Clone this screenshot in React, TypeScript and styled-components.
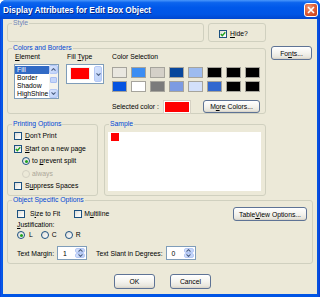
import React from 'react';
import styled, { createGlobalStyle } from 'styled-components';

const Global = createGlobalStyle`
  html, body { margin: 0; padding: 0; background: #ffffff; }
  body { font-family: "Liberation Sans", Arial, sans-serif; -webkit-font-smoothing: antialiased; }
`;

const Window = styled.div`
  width: 320px;
  height: 297px;
  box-sizing: border-box;
  display: flex;
  flex-direction: column;
  background: linear-gradient(to right, #0831D9 0px, #0A5AE8 1px, #0055E5 3px, #0055E5 317px, #0A4CD8 319px, #0831D9 320px);
  border-radius: 6px 6px 0 0;
  overflow: hidden;
`;

const TitleBar = styled.div`
  height: 19px;
  flex: none;
  display: flex;
  align-items: center;
  justify-content: space-between;
  padding: 0 2px 0 3px;
  background: linear-gradient(to bottom, #4A97FB 0%, #0C64EE 14%, #0058EA 40%, #0055E5 75%, #0046CF 100%);
`;

const Title = styled.span`
  color: #ffffff;
  font-weight: bold;
  font-size: 8.3px;
  line-height: 10px;
  text-shadow: 1px 1px 0 #0A2A8A;
  padding-top: 1px;
`;

const CloseBtn = styled.div`
  width: 14px;
  height: 14px;
  box-sizing: border-box;
  border: 1px solid #ffffff;
  border-radius: 3px;
  background: radial-gradient(circle at 35% 30%, #F09A78 0%, #E0613A 45%, #C43A12 100%);
  display: flex;
  align-items: center;
  justify-content: center;
  margin-top: 1px;
`;

const Body = styled.div`
  flex: 1;
  margin: 0 3px 3px 3px;
  background: #ECE9D8;
  padding: 4px 5px 0 4px;
  display: flex;
  flex-direction: column;
  font-size: 6.8px;
  color: #000000;
`;

const TopArea = styled.div`
  display: flex;
  gap: 5px;
`;

const LeftCol = styled.div`
  width: 259px;
  display: flex;
  flex-direction: column;
`;

const RightCol = styled.div`
  display: flex;
  flex-direction: column;
  padding-top: 23px;
`;

const Row = styled.div<{ $gap: number; $mt?: number }>`
  display: flex;
  gap: ${(p) => p.$gap}px;
  margin-top: ${(p) => p.$mt ?? 0}px;
`;

const Group = styled.div<{ $w: number; $h: number; $mt?: number }>`
  position: relative;
  box-sizing: border-box;
  width: ${(p) => p.$w}px;
  height: ${(p) => p.$h}px;
  margin-top: ${(p) => p.$mt ?? 0}px;
  border: 1px solid #D0D0BF;
  border-radius: 3px;
  flex: none;
`;

const Caption = styled.span<{ $muted?: boolean }>`
  position: absolute;
  top: -5px;
  left: 4px;
  padding: 0 1px;
  background: #ECE9D8;
  color: ${(p) => (p.$muted ? '#6F86B8' : '#0046D5')};
  font-size: 6.8px;
  line-height: 8px;
  white-space: nowrap;
`;

const Key = styled.span`
  text-decoration: underline;
  text-underline-offset: 1px;
`;

const HideInner = styled.div`
  height: 100%;
  display: flex;
  align-items: center;
  padding: 1px 0 0 10px;
`;

const Check = styled.label<{ $gap?: number; $dim?: boolean; $ml?: number }>`
  display: flex;
  align-items: center;
  gap: ${(p) => p.$gap ?? 3}px;
  margin-left: ${(p) => p.$ml ?? 0}px;
  height: 8px;
  line-height: 8px;
  white-space: nowrap;
  color: ${(p) => (p.$dim ? '#ACA899' : '#000000')};
`;

const Box = styled.span`
  width: 8px;
  height: 8px;
  box-sizing: border-box;
  border: 1px solid #1C5180;
  background: linear-gradient(135deg, #DCDCD7 0%, #F5F5F3 60%, #FFFFFF 100%);
  display: flex;
  align-items: center;
  justify-content: center;
  flex: none;
`;

const Radio = styled.span<{ $disabled?: boolean }>`
  width: 8px;
  height: 8px;
  box-sizing: border-box;
  border-radius: 50%;
  border: 1px solid ${(p) => (p.$disabled ? '#D4D1C3' : '#1C5180')};
  background: ${(p) => (p.$disabled ? '#ECE9D8' : 'linear-gradient(135deg, #DCDCD7 0%, #FFFFFF 100%)')};
  display: flex;
  align-items: center;
  justify-content: center;
  flex: none;
`;

const Dot = styled.span`
  width: 3px;
  height: 3px;
  border-radius: 50%;
  background: #21A121;
`;

const CheckMark = () => (
  <svg width="6" height="6" viewBox="0 0 6 6">
    <polyline points="0.8,3 2.3,4.6 5.3,1.2" fill="none" stroke="#21A121" strokeWidth="1.4" />
  </svg>
);

const Button = styled.div<{ $w: number; $h?: number }>`
  width: ${(p) => p.$w}px;
  height: ${(p) => p.$h ?? 14}px;
  box-sizing: border-box;
  border: 1px solid #5E7395;
  border-radius: 3px;
  background: linear-gradient(to bottom, #FFFFFF 0%, #F4F3EE 50%, #E8E6DD 85%, #D6D0C5 100%);
  display: flex;
  align-items: center;
  justify-content: center;
  font-size: 6.8px;
  color: #000000;
  white-space: nowrap;
  flex: none;
`;

const ColorsInner = styled.div`
  display: flex;
  padding: 4px 0 0 6px;
`;

const Column = styled.div<{ $w?: number; $ml?: number }>`
  display: flex;
  flex-direction: column;
  width: ${(p) => (p.$w ? `${p.$w}px` : 'auto')};
  margin-left: ${(p) => p.$ml ?? 0}px;
`;

const FieldLabel = styled.div<{ $pl?: number }>`
  line-height: 8px;
  height: 8px;
  padding-left: ${(p) => p.$pl ?? 1}px;
  white-space: nowrap;
`;

const InlineLabel = styled.span<{ $ml?: number }>`
  margin-left: ${(p) => p.$ml ?? 0}px;
  white-space: nowrap;
`;

const ListBox = styled.div`
  margin-top: 3px;
  width: 45px;
  height: 35px;
  box-sizing: border-box;
  border: 1px solid #7F9DB9;
  background: #ffffff;
  display: flex;
`;

const ListItems = styled.div`
  flex: 1;
  display: flex;
  flex-direction: column;
  padding-top: 1px;
`;

const ListItem = styled.div<{ $sel?: boolean }>`
  height: 8px;
  line-height: 8px;
  padding-left: 2px;
  background: ${(p) => (p.$sel ? '#316AC5' : 'transparent')};
  color: ${(p) => (p.$sel ? '#ffffff' : '#000000')};
  white-space: nowrap;
  overflow: hidden;
`;

const ScrollBar = styled.div`
  width: 9px;
  display: flex;
  flex-direction: column;
  background: #F4F3EE;
`;

const ScrollBtn = styled.div<{ $h?: number }>`
  height: ${(p) => p.$h ?? 9}px;
  box-sizing: border-box;
  border: 1px solid #B4C8F6;
  border-radius: 2px;
  background: linear-gradient(135deg, #D8E4FD 0%, #BCD0F8 100%);
  display: flex;
  align-items: center;
  justify-content: center;
  flex: none;
`;

const ScrollTrack = styled.div`
  flex: 1;
  display: flex;
  flex-direction: column;
  padding-top: 3px;
`;

const Thumb = styled.div`
  height: 4px;
  margin: 0 1px;
  border-radius: 1px;
  background: #C4D5FA;
  border: 1px solid #A8BEF2;
`;

const Arrow = ({ up, color = '#4D6185' }: { up?: boolean; color?: string }) => (
  <svg width="5" height="3" viewBox="0 0 5 3">
    <polyline
      points={up ? '0.5,2.6 2.5,0.6 4.5,2.6' : '0.5,0.4 2.5,2.4 4.5,0.4'}
      fill="none"
      stroke={color}
      strokeWidth="1.1"
    />
  </svg>
);

const Dropdown = styled.div`
  margin-top: 3px;
  width: 38px;
  height: 20px;
  box-sizing: border-box;
  border: 1px solid #7F9DB9;
  background: #ffffff;
  display: flex;
  align-items: stretch;
  padding: 1px;
  gap: 5px;
`;

const DropSwatch = styled.div`
  width: 18px;
  height: 11px;
  margin: 2px 0 0 3px;
  background: #FF0000;
  box-shadow: 0 0 0 1px #F0F0F0;
`;

const DropBtn = styled.div`
  width: 8px;
  margin-left: auto;
  box-sizing: border-box;
  border: 1px solid #B4C8F6;
  border-radius: 2px;
  background: linear-gradient(135deg, #D8E4FD 0%, #BCD0F8 100%);
  display: flex;
  align-items: center;
  justify-content: center;
`;

const SwatchGrid = styled.div`
  margin-top: 6px;
  display: grid;
  grid-template-columns: repeat(8, 15px);
  grid-auto-rows: 11px;
  column-gap: 4px;
  row-gap: 3px;
`;

const Swatch = styled.div<{ $c: string }>`
  box-sizing: border-box;
  background: ${(p) => p.$c};
  border: 1px solid #A6A49C;
`;

const SelectedRow = styled.div`
  margin-top: 8px;
  display: flex;
  align-items: center;
  height: 13px;
`;

const SelSwatch = styled.div`
  margin-left: 5px;
  width: 26px;
  height: 12px;
  box-sizing: border-box;
  border: 1px solid #FFFFFF;
  outline: 1px solid #D6D2C4;
  background: #FF0000;
`;

const PrintInner = styled.div`
  display: flex;
  flex-direction: column;
  gap: 4.5px;
  padding: 7px 0 0 6px;
`;

const Indent = styled.div`
  margin-left: 8px;
`;

const SampleArea = styled.div`
  margin: 7px 0 0 3px;
  width: 153px;
  height: 59px;
  background: #FFFFFF;
  padding: 1px 0 0 3px;
  box-sizing: border-box;
`;

const RedSquare = styled.div`
  width: 8px;
  height: 8px;
  background: #FF0000;
`;

const ObjInner = styled.div`
  display: flex;
  flex-direction: column;
  padding: 6px 5px 0 9px;
`;

const ObjRow = styled.div<{ $mt?: number; $gap?: number }>`
  display: flex;
  align-items: center;
  gap: ${(p) => p.$gap ?? 0}px;
  margin-top: ${(p) => p.$mt ?? 0}px;
`;

const Push = styled.div`
  margin-left: auto;
`;

const Spin = styled.div<{ $w: number }>`
  width: ${(p) => p.$w}px;
  height: 14px;
  box-sizing: border-box;
  border: 1px solid #7F9DB9;
  background: #FFFFFF;
  display: flex;
  padding: 1px;
`;

const SpinValue = styled.div`
  flex: 1;
  padding-left: 4px;
  line-height: 12px;
`;

const SpinBtns = styled.div`
  width: 10px;
  display: flex;
  flex-direction: column;
`;

const SpinBtn = styled.div`
  flex: 1;
  box-sizing: border-box;
  border: 1px solid #B4C8F6;
  border-radius: 2px;
  background: linear-gradient(135deg, #D8E4FD 0%, #BCD0F8 100%);
  display: flex;
  align-items: center;
  justify-content: center;
`;

const ButtonRow = styled.div`
  display: flex;
  gap: 15px;
  margin-top: 10px;
  padding-left: 107px;
`;

const swatches = [
  '#E9E7E0', '#3B8DF3', '#D4D0C8', '#08479C', '#9DBBEF', '#000000', '#000000', '#000000',
  '#0553E0', '#FFFFFF', '#7B7B7B', '#7D9BE2', '#D3E0FA', '#3167CF', '#000000', '#000000',
];

const SpinBox = ({ w, value }: { w: number; value: string }) => (
  <Spin $w={w}>
    <SpinValue>{value}</SpinValue>
    <SpinBtns>
      <SpinBtn>
        <Arrow up />
      </SpinBtn>
      <SpinBtn>
        <Arrow />
      </SpinBtn>
    </SpinBtns>
  </Spin>
);

export default function App() {
  return (
    <>
      <Global />
      <Window>
        <TitleBar>
          <Title>Display Attributes for Edit Box Object</Title>
          <CloseBtn>
            <svg width="8" height="8" viewBox="0 0 8 8">
              <path d="M1 1 L7 7 M7 1 L1 7" stroke="#FFFFFF" strokeWidth="1.6" />
            </svg>
          </CloseBtn>
        </TitleBar>
        <Body>
          <TopArea>
            <LeftCol>
              <Row $gap={4}>
                <Group $w={197} $h={19}>
                  <Caption $muted>Style</Caption>
                </Group>
                <Group $w={58} $h={19}>
                  <HideInner>
                    <Check>
                      <Box>
                        <CheckMark />
                      </Box>
                      <span>
                        <Key>H</Key>ide?
                      </span>
                    </Check>
                  </HideInner>
                </Group>
              </Row>
              <Group $w={259} $h={66} $mt={6}>
                <Caption>Colors and Borders</Caption>
                <ColorsInner>
                  <Column $w={45}>
                    <FieldLabel>
                      <Key>E</Key>lement
                    </FieldLabel>
                    <ListBox>
                      <ListItems>
                        <ListItem $sel>Fill</ListItem>
                        <ListItem>Border</ListItem>
                        <ListItem>Shadow</ListItem>
                        <ListItem>HighShine</ListItem>
                      </ListItems>
                      <ScrollBar>
                        <ScrollBtn>
                          <Arrow up />
                        </ScrollBtn>
                        <ScrollTrack>
                          <Thumb />
                        </ScrollTrack>
                        <ScrollBtn>
                          <Arrow />
                        </ScrollBtn>
                      </ScrollBar>
                    </ListBox>
                  </Column>
                  <Column $w={38} $ml={7}>
                    <FieldLabel>
                      Fill <Key>T</Key>ype
                    </FieldLabel>
                    <Dropdown>
                      <DropSwatch />
                      <DropBtn>
                        <Arrow />
                      </DropBtn>
                    </Dropdown>
                  </Column>
                  <Column $ml={8}>
                    <FieldLabel $pl={0}>Color Selection</FieldLabel>
                    <SwatchGrid>
                      {swatches.map((c, i) => (
                        <Swatch key={i} $c={c} />
                      ))}
                    </SwatchGrid>
                    <SelectedRow>
                      <span>Selected color :</span>
                      <SelSwatch />
                      <Push>
                        <Button $w={57} $h={13}>
                          M<Key>o</Key>re Colors...
                        </Button>
                      </Push>
                    </SelectedRow>
                  </Column>
                </ColorsInner>
              </Group>
              <Row $gap={6} $mt={10}>
                <Group $w={91} $h={72}>
                  <Caption>Printing Options</Caption>
                  <PrintInner>
                    <Check>
                      <Box />
                      <span>
                        <Key>D</Key>on't Print
                      </span>
                    </Check>
                    <Check>
                      <Box>
                        <CheckMark />
                      </Box>
                      <span>
                        <Key>S</Key>tart on a new page
                      </span>
                    </Check>
                    <Indent>
                      <Check $gap={2}>
                        <Radio>
                          <Dot />
                        </Radio>
                        <span>
                          to <Key>p</Key>revent split
                        </span>
                      </Check>
                    </Indent>
                    <Indent>
                      <Check $gap={2} $dim>
                        <Radio $disabled />
                        <span>always</span>
                      </Check>
                    </Indent>
                    <Check>
                      <Box />
                      <span>
                        S<Key>u</Key>ppress Spaces
                      </span>
                    </Check>
                  </PrintInner>
                </Group>
                <Group $w={162} $h={72}>
                  <Caption>Sample</Caption>
                  <SampleArea>
                    <RedSquare />
                  </SampleArea>
                </Group>
              </Row>
            </LeftCol>
            <RightCol>
              <Button $w={41} $h={14}>
                Fo<Key>n</Key>ts...
              </Button>
            </RightCol>
          </TopArea>
          <Group $w={306} $h={64} $mt={4}>
            <Caption>Object Specific Options</Caption>
            <ObjInner>
              <ObjRow>
                <Check $gap={5}>
                  <Box />
                  <span>
                    S<Key>i</Key>ze to Fit
                  </span>
                </Check>
                <Check $gap={2} $ml={14}>
                  <Box />
                  <span>
                    M<Key>u</Key>ltiline
                  </span>
                </Check>
                <Push>
                  <Button $w={74} $h={14}>
                    Table<Key>V</Key>iew Options...
                  </Button>
                </Push>
              </ObjRow>
              <FieldLabel $pl={0}>
                <Key>J</Key>ustification:
              </FieldLabel>
              <ObjRow $mt={2} $gap={8}>
                <Check $gap={4}>
                  <Radio>
                    <Dot />
                  </Radio>
                  <span>L</span>
                </Check>
                <Check $gap={3}>
                  <Radio />
                  <span>C</span>
                </Check>
                <Check $gap={3}>
                  <Radio />
                  <span>R</span>
                </Check>
              </ObjRow>
              <ObjRow $mt={7} $gap={3}>
                <InlineLabel>Text Margin:</InlineLabel>
                <SpinBox w={30} value="1" />
                <InlineLabel $ml={6}>Text Slant in Degrees:</InlineLabel>
                <SpinBox w={30} value="0" />
              </ObjRow>
            </ObjInner>
          </Group>
          <ButtonRow>
            <Button $w={41} $h={15}>
              OK
            </Button>
            <Button $w={41} $h={15}>
              Cancel
            </Button>
          </ButtonRow>
        </Body>
      </Window>
    </>
  );
}
